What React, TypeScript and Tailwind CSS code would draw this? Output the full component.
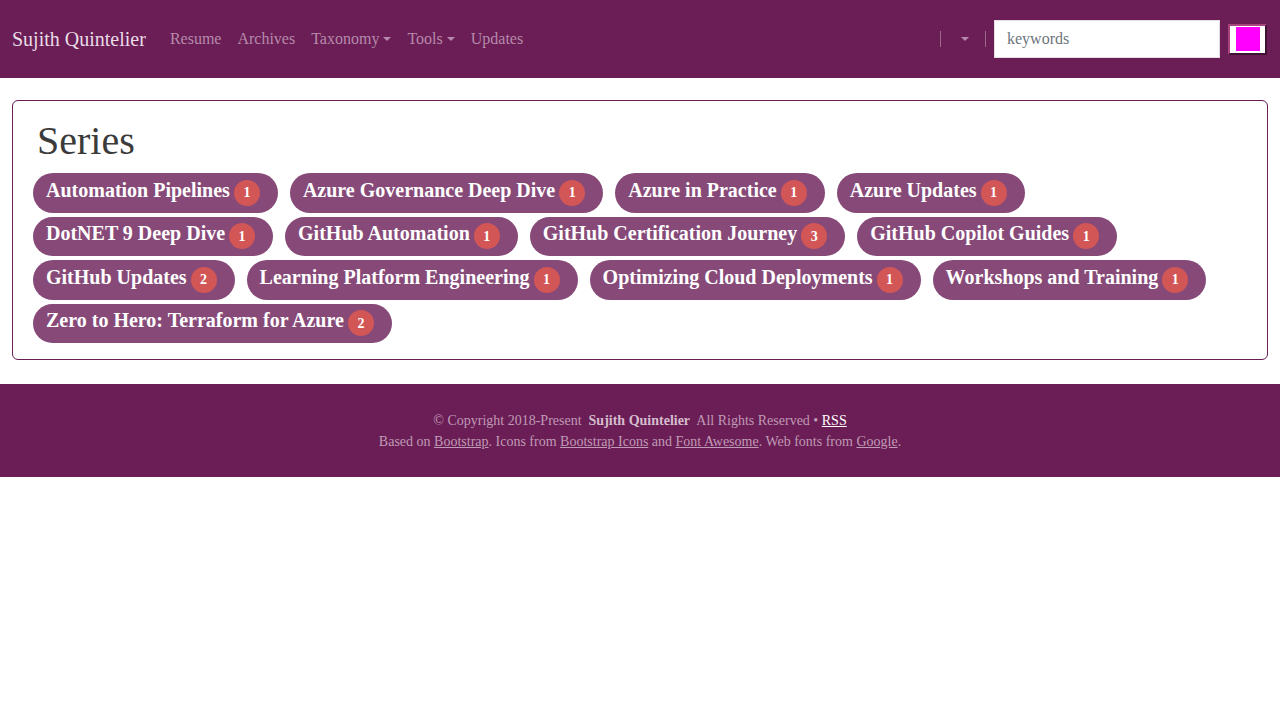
import { useState } from "react";

const series = [
  { name: "Automation Pipelines", count: 1 },
  { name: "Azure Governance Deep Dive", count: 1 },
  { name: "Azure in Practice", count: 1 },
  { name: "Azure Updates", count: 1 },
  { name: "DotNET 9 Deep Dive", count: 1 },
  { name: "GitHub Automation", count: 1 },
  { name: "GitHub Certification Journey", count: 3 },
  { name: "GitHub Copilot Guides", count: 1 },
  { name: "GitHub Updates", count: 2 },
  { name: "Learning Platform Engineering", count: 1 },
  { name: "Optimizing Cloud Deployments", count: 1 },
  { name: "Workshops and Training", count: 1 },
  { name: "Zero to Hero: Terraform for Azure", count: 2 },
];

const Caret = () => (
  <span className="ml-[4px] inline-block h-0 w-0 border-x-[4px] border-t-[4px] border-x-transparent border-t-current align-middle" />
);

export default function App() {
  const [q, setQ] = useState("");

  return (
    <div className="min-h-screen bg-white font-['Liberation_Serif',serif]">
      {/* Navbar */}
      <nav className="flex h-[78px] items-center bg-[#6a1e55] pl-3 pr-[13px]">
        <a className="mr-6 text-[20px] text-[#e9dce6]">Sujith Quintelier</a>
        <div className="flex items-center gap-4 text-[16px] text-[#b68aab]">
          <a>Resume</a>
          <a>Archives</a>
          <a className="flex items-center">Taxonomy<Caret /></a>
          <a className="flex items-center">Tools<Caret /></a>
          <a>Updates</a>
        </div>
        <div className="ml-auto flex items-center">
          <div className="h-[16px] w-px bg-[#9a6a8d]" />
          <div className="flex w-[44px] items-center justify-center text-[#b68aab]">
            <Caret />
          </div>
          <div className="h-[16px] w-px bg-[#9a6a8d]" />
          <input
            value={q}
            onChange={(e) => setQ(e.target.value)}
            placeholder="keywords"
            className="ml-2 h-[38px] w-[226px] border border-[#e5dde2] bg-white px-3 text-[16px] text-[#333] outline-none placeholder:text-[#6c757d]"
          />
          <button className="ml-2 flex h-[31px] w-[39px] items-center justify-center border-2 border-t-[#a8457f] border-l-[#a8457f] border-b-[#3f1133] border-r-[#3f1133] bg-white">
            <span className="h-[24px] w-[24px] bg-[#ff00ff]" />
          </button>
        </div>
      </nav>

      {/* Series card */}
      <main className="px-3 pt-[22px]">
        <div className="rounded-[6px] border border-[#6a1e55] px-5 pb-[16px] pt-[16px]">
          <h1 className="mb-[8px] ml-1 text-[40px] leading-[48px] text-[#3b3b3b]">Series</h1>
          <div className="flex flex-wrap gap-x-3 gap-y-1">
            {series.map((s) => (
              <a
                key={s.name}
                className="flex h-[39.5px] items-center rounded-full bg-[#874a78] pl-[13px] pr-[18px] text-[20px] font-bold text-white"
              >
                <span className="mb-[6px]">{s.name}</span>
                <span className="ml-[4px] flex h-[26px] w-[26px] items-center justify-center rounded-full bg-[#d25656] text-[14px] font-bold">
                  {s.count}
                </span>
              </a>
            ))}
          </div>
        </div>
      </main>

      {/* Footer */}
      <footer className="mt-6 flex h-[93px] flex-col items-center justify-center bg-[#6a1e55] text-[14px] leading-[21px] text-[#c09ab6]">
        <p>
          © Copyright 2018-Present&nbsp; <b className="text-[#d5bccd]">Sujith Quintelier</b>&nbsp; All Rights Reserved •{" "}
          <a className="text-white underline">RSS</a>
        </p>
        <p>
          Based on <a className="underline">Bootstrap</a>. Icons from <a className="underline">Bootstrap Icons</a> and{" "}
          <a className="underline">Font Awesome</a>. Web fonts from <a className="underline">Google</a>.
        </p>
      </footer>
    </div>
  );
}
